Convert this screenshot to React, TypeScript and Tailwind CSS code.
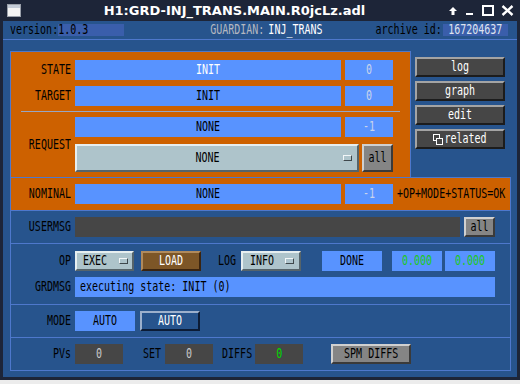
import React from 'react'

// MEDM-style text: narrow fixed font, stretched vertically like the X bitmap font
const T = ({ children, className = '' }: { children: React.ReactNode; className?: string }) => (
  <span className={`inline-block scale-y-[1.35] whitespace-pre leading-none ${className}`}>{children}</span>
)

const section = 'border border-[#4e78cc] -mt-px'
const blueBox = 'h-[20px] bg-[#5893ff] flex items-center justify-center'
const numBox = 'w-[48px] h-[20px] bg-[#5893ff] flex items-center justify-center text-[#c8d4ec]'
const darkBtn =
  'w-[90px] h-[20px] bg-[#464646] border-2 border-t-[#a4a4a4] border-l-[#a4a4a4] border-r-[#1c1c1c] border-b-[#1c1c1c] flex items-center justify-center text-white'
const grayBtn =
  'h-[20px] bg-[#858585] border-2 border-t-[#d0d0d0] border-l-[#d0d0d0] border-r-[#3a3a3a] border-b-[#3a3a3a] flex items-center justify-center'
const menu =
  'bg-[#aec4cb] border-2 border-t-[#e6eef0] border-l-[#e6eef0] border-r-[#56646a] border-b-[#56646a] flex items-center'

const Ind = () => (
  <span className="w-[9px] h-[6px] bg-[#aec4cb] border border-t-[#f2f6f8] border-l-[#f2f6f8] border-r-[#3e484c] border-b-[#3e484c]" />
)

function Label({ children }: { children: React.ReactNode }) {
  return (
    <div className="w-[60px] shrink-0 flex justify-end">
      <T>{children}</T>
    </div>
  )
}

function TitleBar() {
  return (
    <div className="h-[21px] flex items-center text-white">
      <svg width="14" height="13" viewBox="0 0 14 13" className="ml-[7px]">
        <rect x="0.5" y="0.5" width="13" height="12" fill="#f4f4f4" stroke="#9aa0aa" />
        <rect x="1" y="1" width="12" height="3" fill="#c4ccd8" />
      </svg>
      <div className="flex-1 text-center font-['DejaVu_Sans',sans-serif] font-bold text-[13px] leading-none">
        H1:GRD-INJ_TRANS.MAIN.R0jcLz.adl
      </div>
      <div className="flex items-center gap-[7px] mr-[6px]">
        <svg width="10" height="10" viewBox="0 0 10 10">
          <path d="M5 1 L9 5 H6.5 V9 H3.5 V5 H1 Z" fill="white" />
        </svg>
        <svg width="10" height="10" viewBox="0 0 10 10">
          <rect x="1" y="7" width="7" height="2" fill="white" />
        </svg>
        <svg width="12" height="11" viewBox="0 0 12 11">
          <rect x="1" y="1" width="10" height="9" fill="none" stroke="white" strokeWidth="2" />
        </svg>
        <svg width="13" height="11" viewBox="0 0 13 11">
          <path d="M1.5 1 L11.5 10 M11.5 1 L1.5 10" stroke="white" strokeWidth="2.4" />
        </svg>
      </div>
    </div>
  )
}

export default function App() {
  return (
    <div className="w-[520px] h-[384px] bg-[#ececec] font-['DejaVu_Sans_Mono',monospace] text-[10px] text-black">
      <div className="h-[380px] flex flex-col bg-[#1d2538]">
        <TitleBar />
        <div className="flex-1 mx-[3px] mb-[3px] bg-[#27548d] flex flex-col">
          {/* header */}
          <div className="h-[19px] shrink-0 border-b border-[#4e78cc] flex items-center pl-[7px]">
            <T>version:</T>
            <div className="w-[66px] h-[12px] bg-[#3a5eab] flex items-center">
              <T>1.0.3</T>
            </div>
            <T className="ml-[86px] text-[#b4b8c0]">GUARDIAN:</T>
            <T className="ml-[4px] text-white">INJ_TRANS</T>
            <T className="ml-[53px]">archive id:</T>
            <div className="ml-[1px] w-[65px] h-[12px] bg-[#3a5eab] flex items-center justify-center">
              <T className="text-[#dfe4ee]">167204637</T>
            </div>
          </div>

          <div className="mt-[11px] ml-[7px] w-[501px] flex flex-col">
            {/* state / target / request */}
            <div className="flex">
              <div className="w-[401px] h-[127px] border border-[#4e78cc] bg-[#cd6100] flex flex-col pt-[8px]">
                <div className="flex items-center">
                  <Label>STATE</Label>
                  <div className={`${blueBox} ml-[4px] w-[266px]`}>
                    <T className="text-white">INIT</T>
                  </div>
                  <div className={`${numBox} ml-[4px]`}>
                    <T>0</T>
                  </div>
                </div>
                <div className="flex items-center mt-[6px]">
                  <Label>TARGET</Label>
                  <div className={`${blueBox} ml-[4px] w-[266px]`}>
                    <T>INIT</T>
                  </div>
                  <div className={`${numBox} ml-[4px]`}>
                    <T>0</T>
                  </div>
                </div>
                <div className="mt-[5px] ml-[10px] w-[379px] h-px bg-[#98a6c4]" />
                <div className="flex items-center mt-[5px]">
                  <Label>REQUEST</Label>
                  <div className="ml-[4px] flex flex-col">
                    <div className="flex">
                      <div className={`${blueBox} w-[266px]`}>
                        <T>NONE</T>
                      </div>
                      <div className={`${numBox} ml-[4px]`}>
                        <T>-1</T>
                      </div>
                    </div>
                    <div className="flex mt-[7px]">
                      <div className={`${menu} w-[284px] h-[28px]`}>
                        <div className="flex-1 flex justify-center">
                          <T>NONE</T>
                        </div>
                        <span className="ml-[5px] mr-[5px] flex">
                          <Ind />
                        </span>
                      </div>
                      <div className={`${grayBtn} ml-[3px] w-[31px] h-[28px]`}>
                        <T>all</T>
                      </div>
                    </div>
                  </div>
                </div>
              </div>
              <div className="ml-[4px] pt-[6px] flex flex-col gap-[4px]">
                <div className={darkBtn}>
                  <T>log</T>
                </div>
                <div className={darkBtn}>
                  <T>graph</T>
                </div>
                <div className={darkBtn}>
                  <T>edit</T>
                </div>
                <div className={darkBtn}>
                  <svg width="10" height="11" viewBox="0 0 10 11" className="mr-[1px]">
                    <rect x="0.5" y="0.5" width="6" height="6" fill="none" stroke="white" />
                    <rect x="3.5" y="4.5" width="6" height="6" fill="#464646" stroke="white" />
                  </svg>
                  <T>related</T>
                </div>
              </div>
            </div>

            {/* nominal */}
            <div className={`${section} h-[34px] bg-[#cd6100] flex items-start pt-[6px]`}>
              <div className="flex items-center">
                <Label>NOMINAL</Label>
                <div className={`${blueBox} ml-[4px] w-[266px]`}>
                  <T>NONE</T>
                </div>
                <div className={`${numBox} ml-[4px]`}>
                  <T>-1</T>
                </div>
                <T className="ml-[4px]">+OP+MODE+STATUS=OK</T>
              </div>
            </div>

            {/* usermsg */}
            <div className={`${section} h-[34px] pt-[6px]`}>
              <div className="flex items-center">
                <Label>USERMSG</Label>
                <div className="ml-[4px] w-[385px] h-[20px] bg-[#464646]" />
                <div className={`${grayBtn} ml-[4px] w-[31px]`}>
                  <T>all</T>
                </div>
              </div>
            </div>

            {/* op / grdmsg */}
            <div className={`${section} h-[62px] pt-[7px] flex flex-col`}>
              <div className="flex items-center">
                <Label>OP</Label>
                <div className={`${menu} ml-[4px] w-[59px] h-[20px] pl-[6px] pr-[4px] justify-between`}>
                  <T>EXEC</T>
                  <Ind />
                </div>
                <div className="ml-[7px] w-[60px] h-[20px] bg-[#7d5627] border-2 border-t-[#b08a5c] border-l-[#b08a5c] border-r-[#3a2410] border-b-[#3a2410] flex items-center justify-center text-white">
                  <T>LOAD</T>
                </div>
                <T className="ml-[17px]">LOG</T>
                <div className={`${menu} ml-[5px] w-[60px] h-[20px] pl-[7px] pr-[5px] justify-between`}>
                  <T>INFO</T>
                  <Ind />
                </div>
                <div className={`${blueBox} ml-[21px] w-[60px]`}>
                  <T>DONE</T>
                </div>
                <div className={`${blueBox} ml-[10px] w-[50px] text-[#1ec81e]`}>
                  <T>0.000</T>
                </div>
                <div className={`${blueBox} ml-[3px] w-[50px] text-[#1ec81e]`}>
                  <T>0.000</T>
                </div>
              </div>
              <div className="flex items-center mt-[6px]">
                <Label>GRDMSG</Label>
                <div className="ml-[4px] w-[420px] h-[20px] bg-[#5893ff] flex items-center pl-[5px]">
                  <T>executing state: INIT (0)</T>
                </div>
              </div>
            </div>

            {/* mode */}
            <div className={`${section} h-[34px] pt-[6px]`}>
              <div className="flex items-center">
                <Label>MODE</Label>
                <div className={`${blueBox} ml-[4px] w-[60px]`}>
                  <T>AUTO</T>
                </div>
                <div className="ml-[5px] w-[60px] h-[20px] bg-[#27548d] border-2 border-t-[#9cb0cc] border-l-[#9cb0cc] border-r-[#0c1c36] border-b-[#0c1c36] flex items-center justify-center text-white">
                  <T>AUTO</T>
                </div>
              </div>
            </div>

            {/* pvs */}
            <div className={`${section} h-[34px] pt-[6px]`}>
              <div className="flex items-center">
                <Label>PVs</Label>
                <div className="ml-[4px] w-[48px] h-[20px] bg-[#464646] flex items-center justify-center text-[#c8c8c8]">
                  <T>0</T>
                </div>
                <T className="ml-[20px]">SET</T>
                <div className="ml-[4px] w-[48px] h-[20px] bg-[#464646] flex items-center justify-center text-[#c8c8c8]">
                  <T>0</T>
                </div>
                <T className="ml-[9px]">DIFFS</T>
                <div className="ml-[3px] w-[48px] h-[20px] bg-[#464646] flex items-center justify-center text-[#00d800]">
                  <T>0</T>
                </div>
                <div className={`${grayBtn} ml-[28px] w-[80px]`}>
                  <T>SPM DIFFS</T>
                </div>
              </div>
            </div>
          </div>
        </div>
      </div>
    </div>
  )
}
